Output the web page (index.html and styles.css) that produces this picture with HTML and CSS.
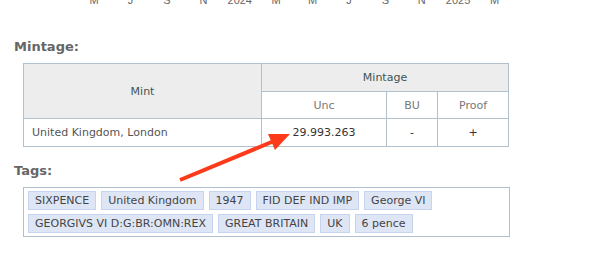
FILE: index.html
```html
<!DOCTYPE html>
<html lang="en">
<head>
  <meta charset="UTF-8" />
  <meta name="viewport" content="width=device-width, initial-scale=1.0"/>
  <title>Sixpence 1947 - Mintage</title>
  <link rel="stylesheet" href="styles.css">
</head>
<body>
  <div class="page">
    <!-- bottom of the price chart, only the month axis is left -->
    <div class="axis">
      <span>M</span><span>J</span><span>S</span><span>N</span><span>2024</span><span>M</span>
      <span>M</span><span>J</span><span>S</span><span>N</span><span>2025</span><span>M</span>
    </div>

    <h3 class="section-title">Mintage:</h3>
    <table class="mintage">
      <thead>
        <tr>
          <th rowspan="2" class="col-mint">Mint</th>
          <th colspan="3">Mintage</th>
        </tr>
        <tr class="sub">
          <th class="col-unc">Unc</th>
          <th class="col-bu">BU</th>
          <th class="col-proof">Proof</th>
        </tr>
      </thead>
      <tbody>
        <tr>
          <td class="mint-name">United Kingdom, London</td>
          <td>29.993.263</td>
          <td>-</td>
          <td>+</td>
        </tr>
      </tbody>
    </table>

    <h3 class="section-title tags-title">Tags:</h3>
    <div class="tags">
      <span class="tag">SIXPENCE</span>
      <span class="tag">United Kingdom</span>
      <span class="tag">1947</span>
      <span class="tag">FID DEF IND IMP</span>
      <span class="tag">George VI</span>
      <span class="tag">GEORGIVS VI D:G:BR:OMN:REX</span>
      <span class="tag">GREAT BRITAIN</span>
      <span class="tag">UK</span>
      <span class="tag">6 pence</span>
    </div>

    <!-- red pointer to the mintage figure -->
    <svg class="pointer" width="613" height="257" viewBox="0 0 613 257">
      <line x1="180" y1="186" x2="274" y2="147" stroke="#fd3b1b" stroke-width="4" />
      <polygon points="290,140 268,140 275,156" fill="#fd3b1b" />
    </svg>
  </div>
</body>
</html>
```

FILE: styles.css
```css
* {
  box-sizing: border-box;
}

body {
  margin: 0;
  background: #fff;
  font-family: "DejaVu Sans", Verdana, sans-serif;
  font-size: 11px;
  color: #444;
  overflow: hidden;
}

.page {
  position: relative;
  width: 613px;
  height: 257px;
}

.axis {
  display: flex;
  margin: -6px 0 0 76px;
  height: 12px;
  line-height: 12px;
  font-family: "Liberation Sans", Arial, sans-serif;
  font-size: 11px;
  color: #666;
}

.axis span {
  width: 36.4px;
  text-align: center;
}

.section-title {
  margin: 33px 0 0 14px;
  font-size: 13px;
  line-height: 16px;
  font-weight: bold;
  color: #666;
}

.tags-title {
  margin-top: 16px;
}

table.mintage {
  margin: 8px 0 0 23px;
  width: 486px;
  border-collapse: collapse;
  border: 1px solid #b0c0cc;
}

.mintage th,
.mintage td {
  border: 1px solid #b0c0cc;
  padding: 0 8px;
  text-align: center;
  font-weight: normal;
}

.mintage th {
  background: #ededed;
  color: #405555;
  height: 28px;
}

.mintage tr.sub th {
  background: #fff;
  color: #777;
  height: 27px;
}

.mintage td {
  height: 28px;
  color: #333;
}

.mintage td.mint-name {
  text-align: left;
  color: #555;
}

.col-mint { width: 238px; }
.col-unc { width: 125px; }
.col-bu { width: 51px; }
.col-proof { width: 71px; }

.tags {
  display: flex;
  flex-wrap: wrap;
  gap: 4px 5px;
  margin: 8px 0 0 23px;
  width: 487px;
  padding: 3px 4px;
  border: 1px solid #b0c0cc;
}

.tag {
  height: 19px;
  line-height: 17px;
  padding: 0 6px;
  background: #dee6f6;
  border: 1px solid #c6d4ed;
  color: #444;
  white-space: nowrap;
}

.pointer {
  position: absolute;
  left: 0;
  top: 0;
  pointer-events: none;
}
```
